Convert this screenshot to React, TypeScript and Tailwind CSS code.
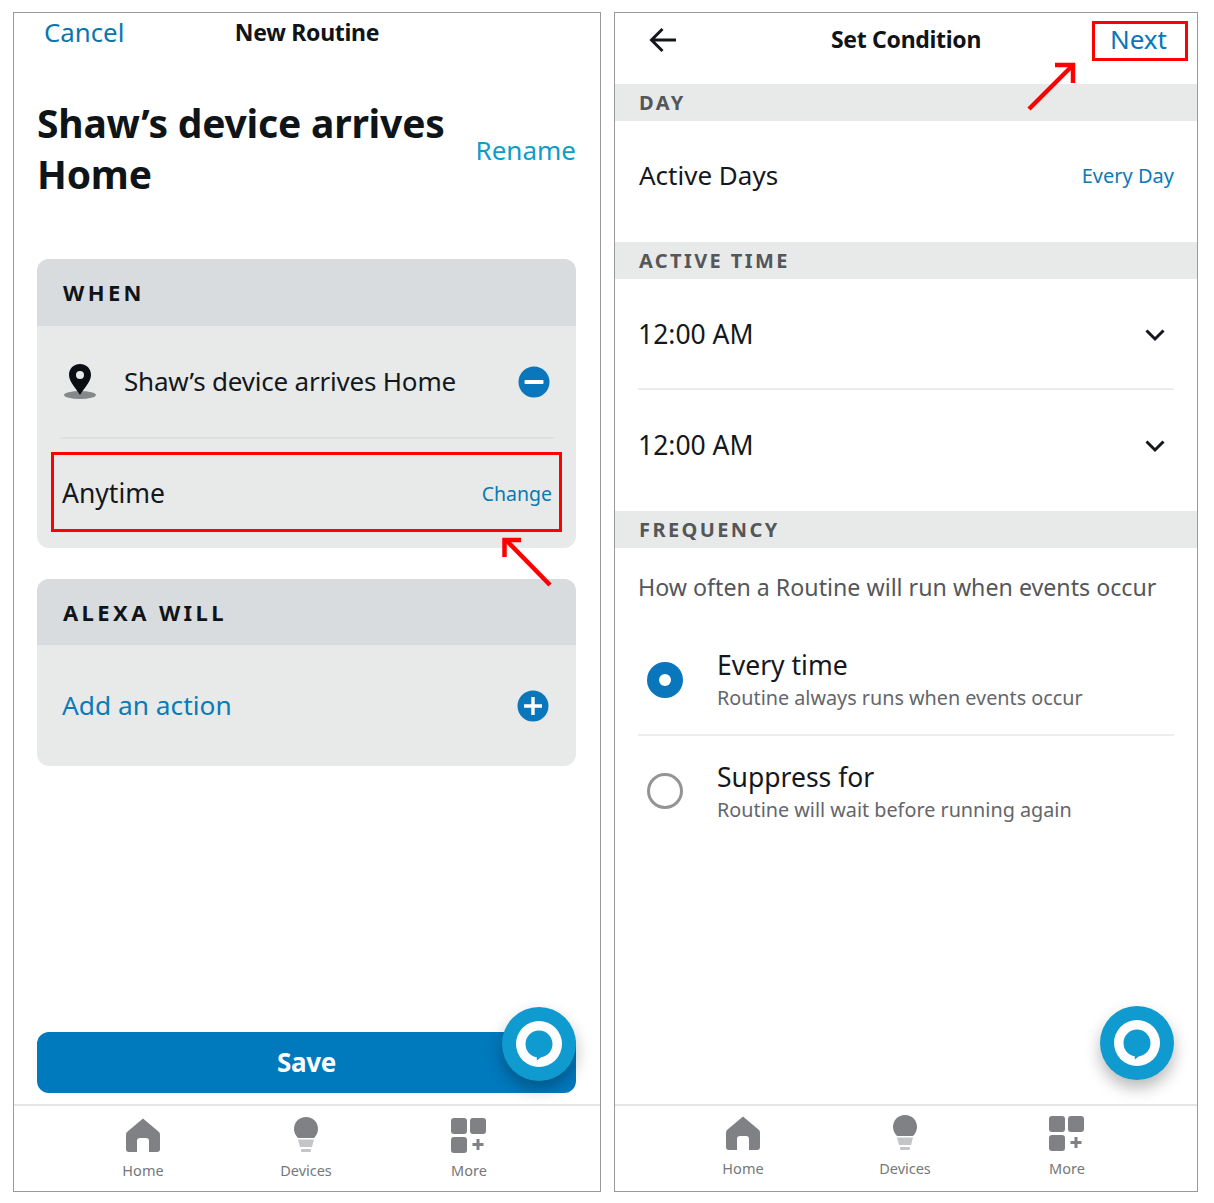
import React from "react";

const font = { fontFamily: '"Noto Sans", sans-serif' };

function HomeIcon() {
  return (
    <svg width="34" height="35" viewBox="0 0 34 35">
      <path fillRule="evenodd" fill="#7f8184" d="M17 0.5 L33 14 Q34 15 34 17 V31 Q34 34 31 34 H23 V23 Q23 20 20 20 H14 Q11 20 11 23 V34 H3 Q0 34 0 31 V17 Q0 15 1 14 Z" />
    </svg>
  );
}

function BulbIcon() {
  return (
    <svg width="24" height="36" viewBox="0 0 24 36">
      <path fill="#7f8184" d="M12 0 C19 0 24 5 24 12 C24 16 22 19 20 21 H4 C2 19 0 16 0 12 C0 5 5 0 12 0 Z" />
      <path fill="#c4c5c7" d="M4 22.5 H20 L18 30 H6 Z" />
      <rect x="7" y="32" width="10" height="3" rx="1" fill="#c4c5c7" />
    </svg>
  );
}

function MoreIcon() {
  return (
    <svg width="36" height="35" viewBox="0 0 36 35">
      <rect x="0" y="0" width="16" height="16" rx="3" fill="#7f8184" />
      <rect x="19" y="0" width="16" height="16" rx="3" fill="#7f8184" />
      <rect x="0" y="19" width="16" height="16" rx="3" fill="#7f8184" />
      <path d="M27 21 V32 M21.5 26.5 H32.5" stroke="#7f8184" strokeWidth="3" />
    </svg>
  );
}

function NavItem({ label, children }: { label: string; children: React.ReactNode }) {
  return (
    <div className="flex flex-1 flex-col items-center">
      <div className="flex h-[36px] items-center justify-center">{children}</div>
      <span className="mt-[7px] text-[14.5px] leading-[20px] text-[#75777a]">{label}</span>
    </div>
  );
}

function BottomNav({ className }: { className: string }) {
  return (
    <div className="flex h-[87px] shrink-0 justify-center border-t-2 border-[#e4e5e5] pt-[11px]">
      <div className={`flex ${className}`}>
        <NavItem label="Home"><HomeIcon /></NavItem>
        <NavItem label="Devices"><BulbIcon /></NavItem>
        <NavItem label="More"><MoreIcon /></NavItem>
      </div>
    </div>
  );
}

function Fab({ className }: { className: string }) {
  return (
    <div className={`absolute flex h-[74px] w-[74px] items-center justify-center rounded-full bg-[#0f9ad0] shadow-[0_8px_16px_rgba(0,0,0,0.28)] ${className}`}>
      <svg width="46" height="46" viewBox="0 0 46 46">
        <circle cx="23" cy="23" r="23" fill="#ffffff" />
        <path fill="#0f9ad0" d="M23 9.5 C30.5 9.5 36.5 15.5 36.5 23 C36.5 30 31.5 35.5 25 36.3 L20.8 39.5 L20.8 36.3 C14.5 35.5 9.5 30 9.5 23 C9.5 15.5 15.5 9.5 23 9.5 Z" />
      </svg>
    </div>
  );
}

function Band({ children }: { children: string }) {
  return (
    <div className="flex h-[37px] items-center bg-[#e8eaea] pl-[24px] text-[20px] font-bold tracking-[2.4px] text-[#54575a]">
      {children}
    </div>
  );
}

function CardHead({ children, className }: { children: string; className: string }) {
  return (
    <div className={`flex items-center bg-[#d9dcde] pl-[26px] text-[22px] font-bold tracking-[3.4px] text-[#0f1419] ${className}`}>
      {children}
    </div>
  );
}

function TimeRow({ divider }: { divider?: boolean }) {
  return (
    <div className={`mx-[23px] flex items-center justify-between pr-[11px] ${divider ? "h-[111px] border-b-2 border-[#eceded] pt-[2px]" : "h-[121px] pb-[10px]"}`}>
      <span className="text-[26.5px] text-[#14181c]">12:00 AM</span>
      <svg width="22" height="14" viewBox="0 0 22 14" className="mr-[-3px]">
        <path d="M2.5 2.5 L11 11 L19.5 2.5" fill="none" stroke="#14181c" strokeWidth="3" />
      </svg>
    </div>
  );
}

function Radio({ on }: { on?: boolean }) {
  return on ? (
    <div className="flex h-[36px] w-[36px] items-center justify-center rounded-full bg-[#0a76bc]">
      <div className="h-[12px] w-[12px] rounded-full bg-white" />
    </div>
  ) : (
    <div className="h-[36px] w-[36px] rounded-full border-[3px] border-[#929496]" />
  );
}

function Option({ on, title, sub, divider }: { on?: boolean; title: string; sub: string; divider?: boolean }) {
  return (
    <div className={`mx-[23px] flex items-center ${divider ? "h-[111px] border-b-2 border-[#eceded]" : "h-[110px]"}`}>
      <div className="ml-[9px] mr-[34px] shrink-0"><Radio on={on} /></div>
      <div className="flex flex-col">
        <span className="text-[26.5px] leading-[34px] text-[#14181c]">{title}</span>
        <span className="mt-[3px] text-[19.8px] leading-[26px] text-[#63666a]">{sub}</span>
      </div>
    </div>
  );
}

export default function App() {
  return (
    <div className="flex h-[1203px] w-[1214px] gap-[13px] overflow-hidden bg-white pl-[13px] pt-[12px]" style={font}>
      {/* Left phone */}
      <div className="relative flex h-[1180px] w-[588px] flex-col border border-[#9a9a9a]">
        <div className="grid h-[38px] shrink-0 grid-cols-[1fr_auto_1fr] items-center">
          <span className="pl-[30px] text-[25.8px] text-[#0a76b0]">Cancel</span>
          <span className="text-[23px] font-bold tracking-[-0.3px] text-[#0f1419]">New Routine</span>
          <span />
        </div>
        <div className="ml-[23px] mr-[24px] mt-[46px] flex items-center justify-between">
          <h1 className="w-[420px] text-[39px] font-bold leading-[51px] tracking-[-0.2px] text-[#0f1419]">
            Shaw’s device arrives Home
          </h1>
          <span className="mt-[4px] text-[26px] text-[#0e9cc9]">Rename</span>
        </div>

        <div className="ml-[23px] mr-[24px] mt-[60px] overflow-hidden rounded-[12px] bg-[#e8eaea]">
          <CardHead className="h-[67px]">WHEN</CardHead>
          <div className="ml-[23px] mr-[22px] flex h-[113px] items-center border-b-2 border-[#dfe1e1]">
            <svg width="34" height="36" viewBox="0 0 34 36" className="ml-[3px] shrink-0">
              <ellipse cx="17" cy="31" rx="16" ry="4" fill="#85888a" />
              <path fillRule="evenodd" fill="#0b0f14" d="M17 0 C24 0 28 5 28 11 C28 18 21 24 17 31 C13 24 6 18 6 11 C6 5 10 0 17 0 Z M17 7 A4 4 0 1 0 17 15 A4 4 0 1 0 17 7 Z" />
            </svg>
            <span className="ml-[27px] flex-1 text-[26px] tracking-[-0.2px] text-[#14181c]">Shaw’s device arrives Home</span>
            <svg width="32" height="32" viewBox="0 0 32 32" className="mr-[4px]">
              <circle cx="16" cy="16" r="15.5" fill="#0a76bc" />
              <rect x="6.5" y="14" width="19" height="4" fill="#fff" rx="1" />
            </svg>
          </div>
          <div className="flex h-[109px] items-center justify-between pl-[25px] pr-[24px]">
            <span className="text-[26.5px] text-[#14181c]">Anytime</span>
            <span className="text-[19.5px] text-[#0a7ab0]">Change</span>
          </div>
        </div>

        <div className="ml-[23px] mr-[24px] mt-[31px] overflow-hidden rounded-[12px] bg-[#e8eaea]">
          <CardHead className="h-[66px]">ALEXA WILL</CardHead>
          <div className="flex h-[121px] items-center justify-between pl-[25px] pr-[27px]">
            <span className="text-[26.3px] text-[#0a7ab8]">Add an action</span>
            <svg width="32" height="32" viewBox="0 0 32 32">
              <circle cx="16" cy="16" r="15.5" fill="#0a76bc" />
              <path d="M7 16 H25 M16 7 V25" stroke="#fff" strokeWidth="3.4" />
            </svg>
          </div>
        </div>

        <div className="flex-1" />
        <div className="ml-[23px] mr-[24px] mb-[11px] flex h-[61px] items-center justify-center rounded-[12px] bg-[#0079bd] text-[26px] font-bold tracking-[-0.3px] text-white">
          Save
        </div>
        <BottomNav className="mr-[2px] w-[489px]" />
        <Fab className="left-[488px] top-[994px]" />

        {/* annotations */}
        <div className="pointer-events-none absolute left-[37px] top-[439px] h-[80px] w-[511px] border-[3px] border-[#ff0000]" />
        <svg className="pointer-events-none absolute left-[486px] top-[522px]" width="56" height="56" viewBox="0 0 56 56">
          <path d="M7 6 L50 50" stroke="#ff0000" strokeWidth="4.5" fill="none" />
          <path d="M4.5 22 V5 H21" stroke="#ff0000" strokeWidth="4.5" fill="none" />
        </svg>
      </div>

      {/* Right phone */}
      <div className="relative flex h-[1180px] w-[584px] flex-col border border-[#9a9a9a]">
        <div className="grid h-[71px] shrink-0 grid-cols-[1fr_auto_1fr] items-center pb-[18px]">
          <svg width="28" height="26" viewBox="0 0 28 26" className="ml-[34px]">
            <path d="M27 13 H3 M13.5 2 L2.5 13 L13.5 24" fill="none" stroke="#14181c" strokeWidth="3" />
          </svg>
          <span className="text-[23px] font-bold tracking-[-0.3px] text-[#0f1419]">Set Condition</span>
          <span className="pr-[30px] text-right text-[26px] text-[#0a76b8]">Next</span>
        </div>
        <Band>DAY</Band>
        <div className="mx-[23px] flex h-[121px] items-center justify-between pb-[12px]">
          <span className="ml-[1px] text-[26px] text-[#14181c]">Active Days</span>
          <span className="text-[20px] text-[#0a7ab8]">Every Day</span>
        </div>
        <Band>ACTIVE TIME</Band>
        <TimeRow divider />
        <TimeRow />
        <Band>FREQUENCY</Band>
        <div className="ml-[23px] mt-[21px] h-[36px] text-[23.2px] leading-[36px] text-[#54575a]">
          How often a Routine will run when events occur
        </div>
        <div className="mt-[20px]">
          <Option on title="Every time" sub="Routine always runs when events occur" divider />
          <Option title="Suppress for" sub="Routine will wait before running again" />
        </div>
        <div className="flex-1" />
        <BottomNav className="mr-[2px] mt-[-2px] w-[486px]" />
        <Fab className="left-[485px] top-[993px]" />

        {/* annotations */}
        <div className="pointer-events-none absolute left-[477px] top-[8px] h-[40px] w-[96px] border-[3px] border-[#ff0000]" />
        <svg className="pointer-events-none absolute left-[410px] top-[48px]" width="52" height="52" viewBox="0 0 52 52">
          <path d="M4 48 L47 5" stroke="#ff0000" strokeWidth="4.5" fill="none" />
          <path d="M30 4 H48 V22" stroke="#ff0000" strokeWidth="4.5" fill="none" />
        </svg>
      </div>
    </div>
  );
}
